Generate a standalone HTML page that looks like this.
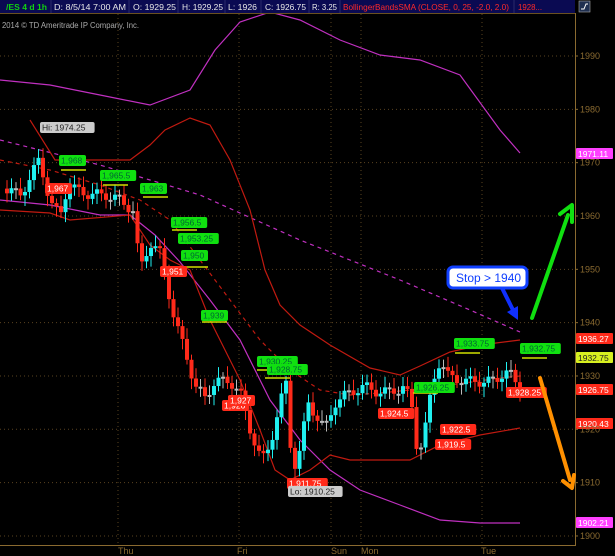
<!DOCTYPE html>
<html><head><meta charset="utf-8"><style>
body{margin:0;background:#000;width:615px;height:556px;overflow:hidden;font-family:"Liberation Sans",sans-serif}
svg{display:block}
</style></head><body>
<svg id="s" width="615" height="556" xmlns="http://www.w3.org/2000/svg" font-family="Liberation Sans, sans-serif">
<rect width="615" height="556" fill="#000"/>
<g id="grid" stroke="#5a4320" stroke-width="1" stroke-dasharray="1,3"></g>
<polyline fill="none" stroke="#c030c0" stroke-width="1.2" points="0,80 50,85 100,95 150,105 190,90 215,50 240,22 270,12 300,20 340,40 380,55 420,60 460,75 500,130 520,153"/>
<polyline fill="none" stroke="#c030c0" stroke-width="1.2" stroke-dasharray="4,4" points="0,140 100,165 200,195 300,240 400,280 470,310 520,332"/>
<polyline fill="none" stroke="#c030c0" stroke-width="1.2" points="0,200 50,205 100,215 130,215 155,235 180,262 210,300 240,340 270,400 300,440 330,470 360,490 400,505 440,520 480,523 520,523"/>
<polyline fill="none" stroke="#c01a10" stroke-width="1.2" points="30,120 55,160 70,160 130,160 150,145 165,130 190,118 210,125 230,160 250,210 265,270 280,305 300,325 330,345 370,368 400,375 420,366 450,352 480,345 520,340"/>
<polyline fill="none" stroke="#c01a10" stroke-width="1.2" stroke-dasharray="4,4" points="0,160 50,170 100,185 140,200 170,220 200,260 230,300 260,340 290,370 320,390 350,395 380,393 410,390 450,385 500,378 520,376"/>
<polyline fill="none" stroke="#c01a10" stroke-width="1.2" points="0,210 50,213 70,220 130,215 150,245 170,260 190,270 210,320 240,380 260,430 275,470 290,480 310,470 330,455 350,460 380,460 410,460 440,445 480,435 520,428"/>
<g id="c"></g>
<g id="lbl" font-size="8.5"></g>
<rect x="0" y="0" width="575" height="13" fill="#0a0a52"/>
<line x1="0" y1="13.5" x2="575" y2="13.5" stroke="#6a5020"/>
<g font-size="8.5" fill="#e8e8e8">
<text x="6" y="10" fill="#10d010" font-weight="bold" textLength="41" lengthAdjust="spacingAndGlyphs">/ES 4 d 1h</text>
<text x="54" y="10" textLength="72" lengthAdjust="spacingAndGlyphs">D: 8/5/14 7:00 AM</text>
<text x="133" y="10" textLength="43" lengthAdjust="spacingAndGlyphs">O: 1929.25</text>
<text x="182" y="10" textLength="41" lengthAdjust="spacingAndGlyphs">H: 1929.25</text>
<text x="228" y="10" textLength="29" lengthAdjust="spacingAndGlyphs">L: 1926</text>
<text x="265" y="10" textLength="41" lengthAdjust="spacingAndGlyphs">C: 1926.75</text>
<text x="312" y="10" textLength="25" lengthAdjust="spacingAndGlyphs">R: 3.25</text>
<text x="343" y="10" fill="#ff2a2a" textLength="166" lengthAdjust="spacingAndGlyphs">BollingerBandsSMA (CLOSE, 0, 25, -2.0, 2.0)</text>
<text x="518" y="10" fill="#ff2a2a" textLength="24" lengthAdjust="spacingAndGlyphs">1928...</text>
</g>
<g stroke="#2a2a6a"><line x1="51" y1="0" x2="51" y2="13"/><line x1="129" y1="0" x2="129" y2="13"/><line x1="178" y1="0" x2="178" y2="13"/><line x1="225" y1="0" x2="225" y2="13"/><line x1="261" y1="0" x2="261" y2="13"/><line x1="309" y1="0" x2="309" y2="13"/><line x1="340" y1="0" x2="340" y2="13"/><line x1="514" y1="0" x2="514" y2="13"/></g>
<rect x="579" y="1" width="11" height="11" fill="#203050" stroke="#aaa" stroke-width="0.6"/>
<path d="M581,9 L584,9 L586,4 L588,4" stroke="#fff" fill="none"/>
<text x="2" y="28" font-size="8" fill="#aaa" textLength="137" lengthAdjust="spacingAndGlyphs">2014 © TD Ameritrade IP Company, Inc.</text>
<line x1="575.5" y1="13" x2="575.5" y2="546" stroke="#8a6a30"/>
<line x1="0" y1="545.5" x2="575" y2="545.5" stroke="#8a6a30"/>
<g id="ax" font-size="9" fill="#8a6a30"></g>
<g font-size="9" fill="#8a6a30"><text x="118" y="554">Thu</text><text x="237" y="554">Fri</text><text x="331" y="554">Sun</text><text x="361" y="554">Mon</text><text x="481" y="554">Tue</text></g>
<line x1="532" y1="318" x2="568" y2="215" stroke="#10e010" stroke-width="4" stroke-linecap="round"/>
<path d="M560,214 L572,205 L572,222" stroke="#10e010" stroke-width="4" fill="none" stroke-linecap="round" stroke-linejoin="round"/>
<line x1="540" y1="378" x2="570" y2="480" stroke="#ff9000" stroke-width="4" stroke-linecap="round"/>
<path d="M563,481 L572,488 L574,475" stroke="#ff9000" stroke-width="4" fill="none" stroke-linecap="round" stroke-linejoin="round"/>
<line x1="502" y1="288" x2="514" y2="312" stroke="#1030ff" stroke-width="4"/>
<path d="M507,312 L518,320 L518,306 Z" fill="#1030ff"/>
<rect x="448" y="267" width="79" height="21" rx="5" fill="#fff" stroke="#1040ff" stroke-width="3"/>
<text x="456" y="282" font-size="12" fill="#1040ff">Stop &gt; 1940</text>
</svg>
<script>
var NS="http://www.w3.org/2000/svg";
function el(p,t,a,txt){var e=document.createElementNS(NS,t);for(var k in a)e.setAttribute(k,a[k]);if(txt)e.textContent=txt;p.appendChild(e);return e;}
function Y(p){return 56+(1990-p)*5.333;}
var g=document.getElementById('grid');
[1990,1980,1970,1960,1950,1940,1930,1920,1910,1900].forEach(function(p){el(g,'line',{x1:0,y1:Y(p),x2:575,y2:Y(p)});});
[118,239,331,361,482].forEach(function(x){el(g,'line',{x1:x,y1:14,x2:x,y2:545});});
var ax=document.getElementById('ax');
[1990,1980,1970,1960,1950,1940,1930,1920,1910,1900].forEach(function(p){el(ax,'text',{x:580,y:Y(p)+3},String(p));el(ax,'line',{x1:575,y1:Y(p),x2:578,y2:Y(p),stroke:'#8a6a30'});});
var path=[[5,1965],[20,1964],[30,1967],[40,1971],[45,1966],[52,1962],[60,1960],[68,1966],[75,1965],[90,1964],[105,1964],[120,1963],[133,1961],[140,1950],[150,1955],[160,1953],[165,1949],[175,1940],[185,1935],[195,1928],[205,1926],[215,1929],[230,1929],[240,1927],[250,1920],[262,1914],[270,1917],[280,1925],[287,1929],[292,1912],[300,1916],[308,1925],[318,1922],[325,1920],[335,1925],[350,1927],[365,1928],[378,1927],[390,1927],[405,1928],[412,1924],[418,1915],[425,1920],[433,1929],[440,1933],[448,1930],[465,1929],[480,1929],[495,1929],[505,1931],[512,1930],[520,1927]];
function P(x){for(var i=1;i<path.length;i++){if(x<=path[i][0]){var a=path[i-1],b=path[i];return a[1]+(b[1]-a[1])*(x-a[0])/(b[0]-a[0]);}}return path[path.length-1][1];}
var c=document.getElementById('c');var prev=P(3);
for(var x=7;x<=522;x+=4.5){var cl=P(x)+Math.sin(x*1.7)*1.0;var o=prev;var hi=Math.max(o,cl)+0.8+Math.abs(Math.sin(x))*1.2,lo=Math.min(o,cl)-0.8-Math.abs(Math.cos(x))*1.2;
var col=Math.abs(cl-o)<0.3?'#bbb':(cl>o?'#20f0f0':'#ff2a1a');
el(c,'line',{x1:x,y1:Y(hi),x2:x,y2:Y(lo),stroke:col,'stroke-width':1});
var t=Y(Math.max(o,cl)),h=Math.max(2,Math.abs(Y(o)-Y(cl)));
el(c,'rect',{x:x-2,y:t,width:4,height:h,fill:col});prev=cl;}
var L=document.getElementById('lbl');
function box(x,y,t,bg,fg,w){w=w||t.length*4.6+4;el(L,'rect',{x:x,y:y,width:w,height:11,rx:2,fill:bg});el(L,'text',{x:x+2,y:y+8.5,fill:fg},t);}
var gl=[[59,155,'1,968',61,170],[100,170,'1,965.5',103,185],[140,183,'1,963',143,197],[171,217,'1,956.5',172,230],[178,233,'1,953.25',178,241],[181,250,'1,950',183,267],[201,310,'1,939',202,322],[257,356,'1,930.25',257,370],[267,364,'1,928.75',265,378],[454,338,'1,933.75',455,353],[414,382,'1,926.25',413,393],[520,343,'1,932.75',522,358]];
gl.forEach(function(a){el(L,'line',{x1:a[3],y1:a[4],x2:a[3]+25,y2:a[4],stroke:'#d0e000','stroke-width':1.5});box(a[0],a[1],a[2],'#10e010','#063');});
[[45,183,'1,967'],[160,266,'1,951'],[222,400,'1,926'],[228,395,'1,927'],[378,408,'1,924.5'],[440,424,'1,922.5'],[435,439,'1,919.5'],[287,478,'1,911.75'],[506,387,'1,928.25']].forEach(function(a){box(a[0],a[1],a[2],'#ff2a1a','#fff');});
box(40,122,'Hi: 1974.25','#ccc','#222');box(288,486,'Lo: 1910.25','#ccc','#222');
function rb(y,t,bg,fg){el(L,'rect',{x:576,y:y-6,width:37,height:11,rx:1,fill:bg});el(L,'text',{x:578,y:y+3,fill:fg},t);}
rb(154,'1971.11','#ff40ff','#fff');rb(339,'1936.27','#ff2a1a','#fff');rb(358,'1932.75','#d8f020','#222');rb(390,'1926.75','#ff2a1a','#fff');rb(424,'1920.43','#ff2a1a','#fff');rb(523,'1902.21','#ff40ff','#fff');
</script>
</body></html>
